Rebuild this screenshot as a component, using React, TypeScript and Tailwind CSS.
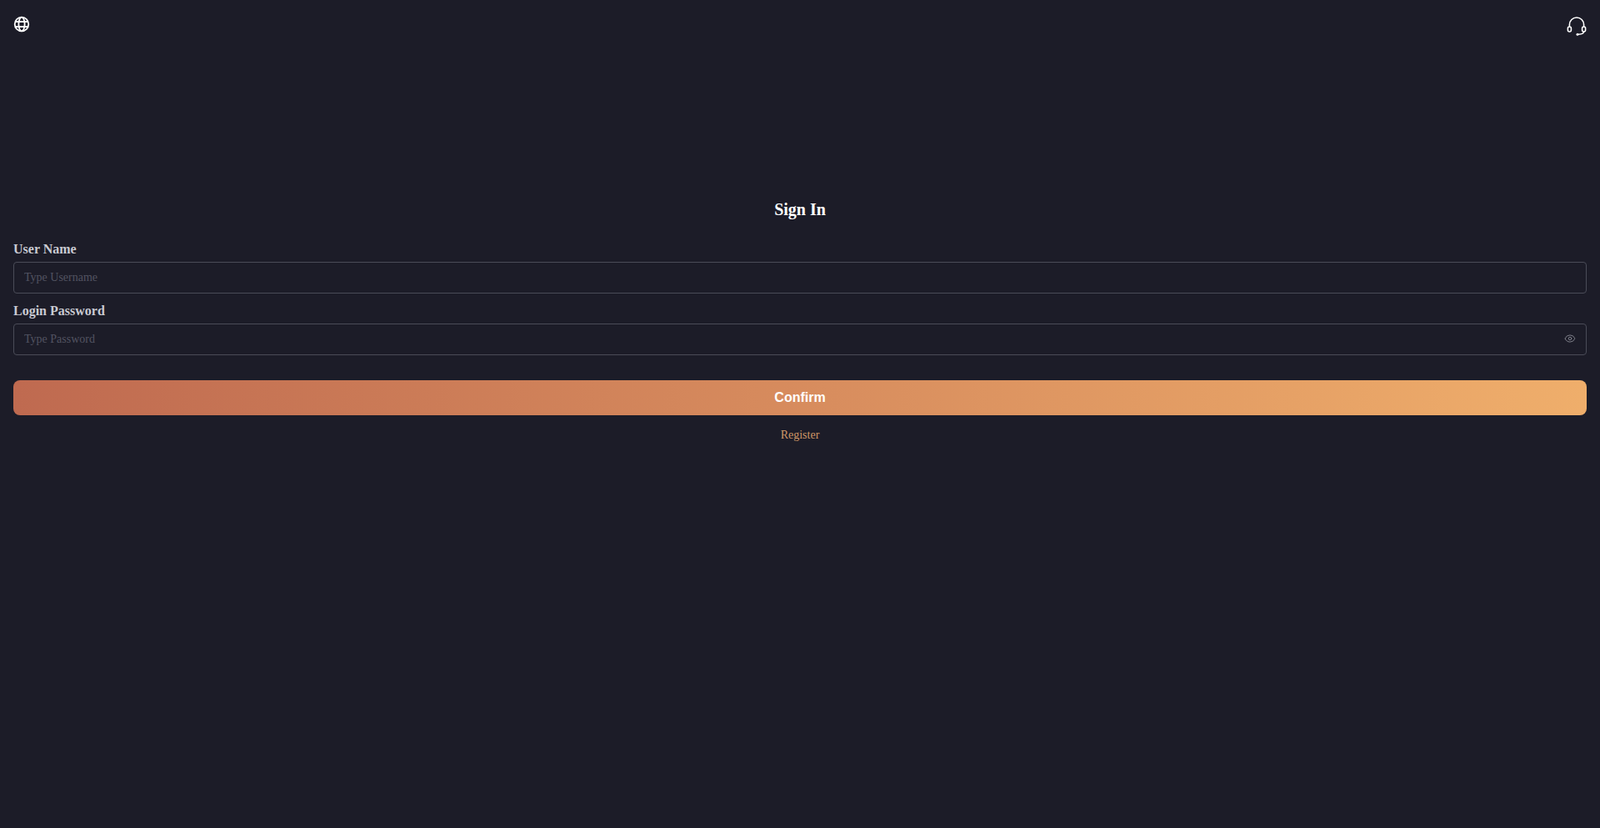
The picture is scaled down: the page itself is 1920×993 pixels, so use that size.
import { Eye } from "lucide-react";

function GlobeIcon() {
  return (
    <svg width="20" height="20" viewBox="0 0 20 20" fill="none" stroke="currentColor" strokeWidth="1.8">
      <circle cx="10" cy="10" r="8.3" />
      <ellipse cx="10" cy="10" rx="3.6" ry="8.3" />
      <path d="M2.2 7h15.6M2.2 13h15.6" />
    </svg>
  );
}

function HeadsetIcon() {
  return (
    <svg width="24" height="24" viewBox="0 0 24 24" fill="none" stroke="currentColor" strokeWidth="1.6" strokeLinecap="round">
      <path d="M3.4 12V9.6a8.6 8.6 0 0 1 17.2 0V12" />
      <rect x="1.4" y="12" width="4" height="6" rx="2" />
      <rect x="18.6" y="12" width="4" height="6" rx="2" />
      <path d="M20.6 18c0 2-2.6 3-6.6 3.2" />
      <circle cx="13" cy="21.2" r="1.5" fill="currentColor" stroke="none" />
    </svg>
  );
}

function Field({ label, placeholder, children }: { label: string; placeholder: string; children?: React.ReactNode }) {
  return (
    <div>
      <label className="block pt-[9px] mb-[3px] text-base leading-6 font-bold text-[#c9cad2]">{label}</label>
      <div className="h-[38px] flex items-center rounded-[4px] border border-[#4a4b57] pl-[12px] pr-[12px]">
        <input
          placeholder={placeholder}
          className="flex-1 bg-transparent text-sm outline-none placeholder:text-[#525361] text-white"
        />
        {children}
      </div>
    </div>
  );
}

export default function App() {
  return (
    <div className="min-h-[993px] bg-[#1c1c28] px-4 font-['Liberation_Serif',serif]">
      {/* Top bar */}
      <div className="h-[237px] flex items-start justify-between pt-[19px] text-white">
        <GlobeIcon />
        <div className="pt-[1px]">
          <HeadsetIcon />
        </div>
      </div>

      <h1 className="text-xl leading-7 font-bold text-white text-center mb-[13px]">Sign In</h1>

      <Field label="User Name" placeholder="Type Username" />
      <Field label="Login Password" placeholder="Type Password">
        <Eye size={14} strokeWidth={1.5} className="text-[#8a8b96] -translate-y-px" />
      </Field>

      <button className="mt-[30px] w-full h-[42px] rounded-[8px] bg-gradient-to-r from-[#bf6a50] to-[#efae6b] text-white text-base font-bold font-['Liberation_Sans',sans-serif]">
        Confirm
      </button>

      <div className="mt-[14px] text-center text-sm leading-5 text-[#cf9766]">Register</div>
    </div>
  );
}
